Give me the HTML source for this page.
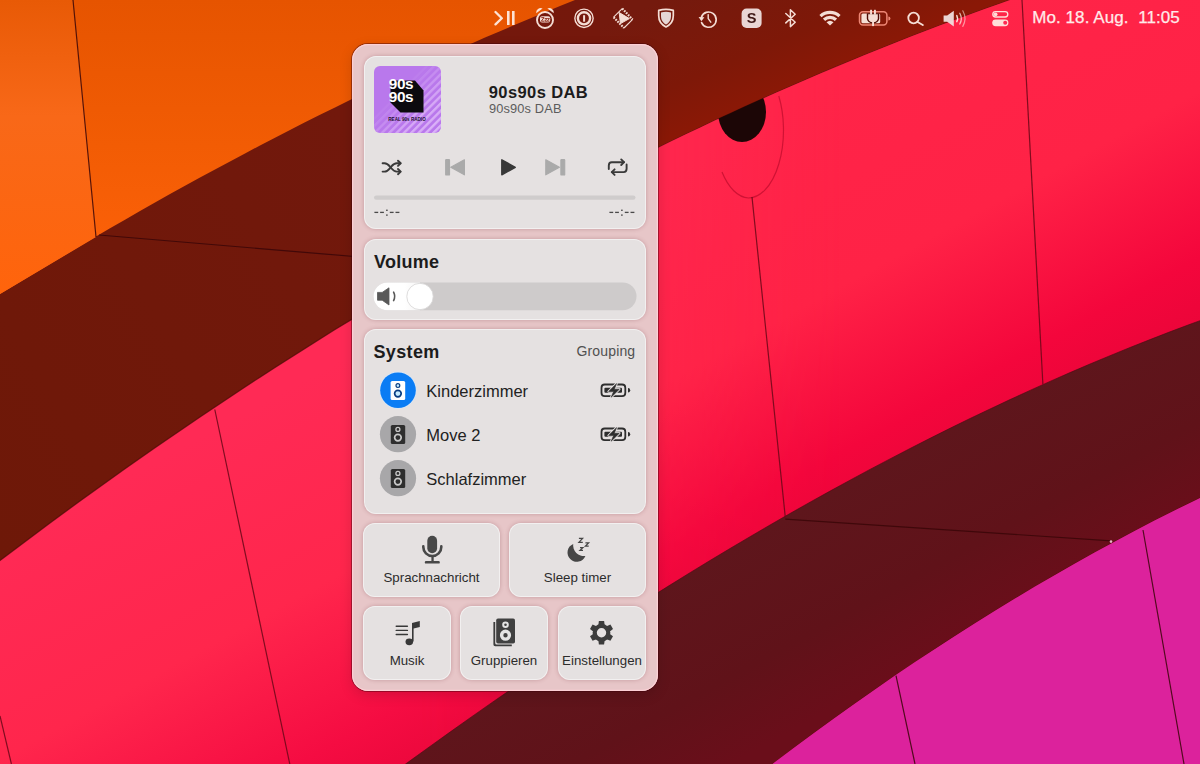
<!DOCTYPE html>
<html><head><meta charset="utf-8">
<style>
*{margin:0;padding:0;box-sizing:border-box}
html,body{width:1200px;height:764px;overflow:hidden;background:#ff2a55;font-family:"Liberation Sans",sans-serif}
svg{position:absolute;left:0;top:0}
.t{position:absolute;white-space:pre;line-height:1}
#popup{position:absolute;left:352px;top:44px;width:306px;height:647px;border-radius:16px;background:#e7c6c8;box-shadow:0 0 0 1px rgba(60,0,10,.42), inset 0 0 0 1.3px rgba(255,208,214,.9), 0 4px 14px rgba(0,0,0,.14)}
.card{position:absolute;border-radius:12px;background:#e5e1e1;box-shadow:inset 0 0 0 1px rgba(255,255,255,.5), 0 0 4px rgba(110,40,50,.28)}
</style></head><body>
<svg width="1200" height="764" viewBox="0 0 1200 764">
 <defs>
  <linearGradient id="gOr" x1="0" y1="0" x2="0" y2="290" gradientUnits="userSpaceOnUse"><stop offset="0" stop-color="#e65400"/><stop offset=".5" stop-color="#f25c04"/><stop offset="1" stop-color="#ff620a"/></linearGradient>
  <linearGradient id="gOrL" x1="0" y1="0" x2="0" y2="290" gradientUnits="userSpaceOnUse"><stop offset="0" stop-color="#e85a06"/><stop offset=".4" stop-color="#f86818"/><stop offset="1" stop-color="#ff640c"/></linearGradient>
  <linearGradient id="gB1" x1="0" y1="560" x2="900" y2="40" gradientUnits="userSpaceOnUse"><stop offset="0" stop-color="#6e1808"/><stop offset=".5" stop-color="#72180c"/><stop offset="1" stop-color="#78180c"/></linearGradient>
  <linearGradient id="gPk" x1="230" y1="420" x2="430" y2="787" gradientUnits="userSpaceOnUse">
   <stop offset="0" stop-color="#ff2a55"/><stop offset=".45" stop-color="#ff264c"/><stop offset=".8" stop-color="#f50c42"/><stop offset="1" stop-color="#e8063a"/>
  </linearGradient>
  <linearGradient id="gPkR" x1="900" y1="40" x2="1100" y2="407" gradientUnits="userSpaceOnUse">
   <stop offset="0" stop-color="#ff2448"/><stop offset=".45" stop-color="#ff2246"/><stop offset=".8" stop-color="#f4063c"/><stop offset="1" stop-color="#e80438"/>
  </linearGradient>
  <linearGradient id="gPkMix" x1="0" y1="0" x2="1200" y2="0" gradientUnits="userSpaceOnUse"><stop offset=".35" stop-color="#fff" stop-opacity="1"/><stop offset=".7" stop-color="#fff" stop-opacity="0"/></linearGradient>
  <mask id="mMix"><rect width="1200" height="764" fill="url(#gPkMix)"/></mask>
  <linearGradient id="gB1R" x1="748.6" y1="-38.5" x2="800" y2="81" gradientUnits="userSpaceOnUse"><stop offset="0" stop-color="#741a0e"/><stop offset=".65" stop-color="#7e1808"/><stop offset="1" stop-color="#8a1806"/></linearGradient>
  <clipPath id="cR"><rect x="600" y="-10" width="700" height="400"/></clipPath>
  <linearGradient id="gB2" x1="900" y1="455" x2="991" y2="622" gradientUnits="userSpaceOnUse"><stop offset="0" stop-color="#5e161c"/><stop offset=".6" stop-color="#601219"/><stop offset="1" stop-color="#6a0e1a"/></linearGradient>
 </defs>
 <rect width="1200" height="764" fill="url(#gPkR)"/>
 <rect width="1200" height="764" fill="url(#gPk)" mask="url(#mMix)"/>
 <path d="M778.8,96 A35,68 0 0 1 748.5,198 A35,68 0 0 1 722,172" fill="none" stroke="#b00626" stroke-opacity=".6" stroke-width="1.2"/>
 <ellipse cx="742" cy="112" rx="24" ry="30" fill="#1c0606"/>
 <g fill="url(#gB1)" stroke="#4a0a04" stroke-width="1.2" stroke-opacity=".7"><polygon points="-10,-10 -10.0,568.1 5.0,556.7 20.0,545.4 35.0,534.2 50.0,523.1 65.0,512.0 80.0,501.1 95.0,490.2 110.0,479.5 125.0,468.8 140.0,458.3 155.0,447.8 170.0,437.4 185.0,427.2 200.0,417.0 215.0,406.9 230.0,396.9 245.0,387.0 260.0,377.2 275.0,367.5 290.0,357.9 305.0,348.4 320.0,338.9 335.0,329.6 350.0,320.4 365.0,311.2 655.0,148.6 670.0,141.3 685.0,134.0 700.0,126.9 715.0,119.8 730.0,112.9 745.0,106.0 760.0,99.2 775.0,92.5 790.0,85.9 805.0,79.4 820.0,73.0 835.0,66.6 850.0,60.4 865.0,54.2 880.0,48.2 895.0,42.2 910.0,36.3 925.0,30.5 940.0,24.8 955.0,19.2 970.0,13.7 985.0,8.2 1000.0,2.9 1015.0,-2.4 1030.0,-7.6 1045,-10"/></g>
 <g fill="url(#gB1R)" clip-path="url(#cR)"><polygon points="-10,-10 -10.0,568.1 5.0,556.7 20.0,545.4 35.0,534.2 50.0,523.1 65.0,512.0 80.0,501.1 95.0,490.2 110.0,479.5 125.0,468.8 140.0,458.3 155.0,447.8 170.0,437.4 185.0,427.2 200.0,417.0 215.0,406.9 230.0,396.9 245.0,387.0 260.0,377.2 275.0,367.5 290.0,357.9 305.0,348.4 320.0,338.9 335.0,329.6 350.0,320.4 365.0,311.2 655.0,148.6 670.0,141.3 685.0,134.0 700.0,126.9 715.0,119.8 730.0,112.9 745.0,106.0 760.0,99.2 775.0,92.5 790.0,85.9 805.0,79.4 820.0,73.0 835.0,66.6 850.0,60.4 865.0,54.2 880.0,48.2 895.0,42.2 910.0,36.3 925.0,30.5 940.0,24.8 955.0,19.2 970.0,13.7 985.0,8.2 1000.0,2.9 1015.0,-2.4 1030.0,-7.6 1045,-10"/></g>
 <g fill="url(#gOr)"><polygon points="-5,-5 590.0,-5.9 575.0,0.0 560.0,6.1 545.0,12.2 530.0,18.4 515.0,24.8 500.0,31.2 485.0,37.6 470.0,44.2 455.0,50.9 440.0,57.6 425.0,64.5 410.0,71.4 395.0,78.4 380.0,85.5 365.0,92.7 350.0,100.0 335.0,107.4 320.0,114.8 305.0,122.3 290.0,130.0 275.0,137.7 260.0,145.5 245.0,153.4 230.0,161.4 215.0,169.4 200.0,177.6 185.0,185.8 170.0,194.1 155.0,202.6 140.0,211.1 125.0,219.7 110.0,228.3 96.0,236.5 0,294 -5,297"/></g>
 <polygon points="-5,-5 72.6,-5 96,237 0,294 -5,297" fill="url(#gOrL)"/>
 <g fill="url(#gB2)" stroke="#4a0a10" stroke-width="1" stroke-opacity=".6"><polygon points="390.0,775.4 410.0,760.8 430.0,746.4 450.0,732.1 470.0,717.9 490.0,703.9 510.0,690.1 530.0,676.4 550.0,662.8 570.0,649.5 590.0,636.3 610.0,623.2 630.0,610.3 650.0,597.6 670.0,585.1 690.0,572.7 710.0,560.5 730.0,548.5 750.0,536.7 770.0,525.0 790.0,513.5 810.0,502.2 830.0,491.1 850.0,480.2 870.0,469.4 890.0,458.9 910.0,448.5 930.0,438.3 950.0,428.3 970.0,418.5 990.0,409.0 1010.0,399.6 1030.0,390.4 1050.0,381.4 1070.0,372.6 1090.0,364.0 1110.0,355.7 1130.0,347.5 1150.0,339.6 1170.0,331.8 1190.0,324.3 1210.0,317.0 1215.0,490.7 1195.0,500.4 1175.0,510.2 1155.0,520.3 1135.0,530.7 1115.0,541.4 1095.0,552.3 1075.0,563.4 1055.0,574.9 1035.0,586.6 1015.0,598.5 995.0,610.7 975.0,623.2 955.0,635.9 935.0,648.9 915.0,662.1 895.0,675.6 875.0,689.4 855.0,703.4 835.0,717.7 815.0,732.2 795.0,747.0 775.0,762.1 755.0,777.4"/></g>
 <g fill="#dc229c"><polygon points="1215.0,490.7 1195.0,500.4 1175.0,510.2 1155.0,520.3 1135.0,530.7 1115.0,541.4 1095.0,552.3 1075.0,563.4 1055.0,574.9 1035.0,586.6 1015.0,598.5 995.0,610.7 975.0,623.2 955.0,635.9 935.0,648.9 915.0,662.1 895.0,675.6 875.0,689.4 855.0,703.4 835.0,717.7 815.0,732.2 795.0,747.0 775.0,762.1 755.0,777.4 745,770 1215,770"/></g>
 <g stroke="#3a0608" stroke-width="1.2" fill="none" opacity=".85">
  <line x1="73" y1="0" x2="96" y2="237"/>
  <line x1="99" y1="235" x2="360" y2="257"/>
  <line x1="214.8" y1="409.5" x2="289.8" y2="764" stroke="#6a0818"/>
  <line x1="0" y1="716" x2="11.4" y2="764" stroke="#6a0818"/>
  <line x1="752" y1="197" x2="785.3" y2="517.3" stroke="#6a0818"/>
  <line x1="1022" y1="0" x2="1042.9" y2="384.4" stroke="#6a0818"/>
  <line x1="785.3" y1="519.2" x2="1111.3" y2="540.8"/>
  <line x1="896" y1="675.6" x2="915" y2="764"/>
  <line x1="1143" y1="530" x2="1184" y2="764"/>
 </g>
 <circle cx="1111" cy="541.6" r="1.3" fill="#ffd6e6" opacity=".85"/>
</svg>

<!-- MENUBAR -->
<svg width="1200" height="36" viewBox="0 0 1200 36" style="opacity:.92">
 <g fill="none" stroke="#ffeee6" stroke-linecap="round" stroke-linejoin="round">
  <!-- >|| -->
  <path d="M495.5,12 L501.8,18.2 L495.5,24.4" stroke-width="2.3"/>
  <line x1="508.3" y1="11" x2="508.3" y2="25" stroke-width="2.6" stroke-linecap="butt"/>
  <line x1="513.3" y1="11" x2="513.3" y2="25" stroke-width="2.6" stroke-linecap="butt"/>
  <!-- alarm -->
  <circle cx="545" cy="20" r="8" stroke-width="1.9"/>
  <!-- 1password -->
  <circle cx="584" cy="18.3" r="9.15" stroke-width="1.4"/>
  <circle cx="584" cy="18.3" r="6.1" stroke-width="2.4"/>
  <line x1="584.1" y1="15.2" x2="584.1" y2="21.7" stroke-width="2" stroke-linecap="butt"/>
  <!-- shield -->
  <path d="M658.7,10.4 Q666,8.4 673.3,10.4 V15.8 C673.3,21.6 670.2,24.9 666,27 C661.8,24.9 658.7,21.6 658.7,15.8 Z" stroke-width="1.7"/>
  <!-- time machine -->
  <path d="M701.4,17.2 A7.6,7.6 0 1 1 701.6,22.6" stroke-width="1.7"/>
  <path d="M708.2,14.6 V18.6 L710.8,22.2" stroke-width="1.4"/>
  <!-- bluetooth -->
  <path d="M785.8,13.5 L795.2,22.2 L790.4,26.6 V9.8 L795.2,14.2 L785.8,22.9" stroke-width="1.5"/>
  <!-- search -->
  <circle cx="913.6" cy="18" r="5.3" stroke-width="1.8"/>
  <line x1="917.6" y1="22" x2="922.8" y2="25" stroke-width="1.9"/>
  <!-- volume waves -->
  <path d="M956.8,15.6 Q958.4,18.6 956.8,21.6" stroke-width="1.5"/>
  <path d="M959.8,13.2 Q962.8,18.6 959.8,24" stroke-width="1.3" stroke-opacity=".8"/>
  <path d="M962.8,10.8 Q967.2,18.6 962.8,26.4" stroke-width="1.2" stroke-opacity=".6"/>
  <!-- control center -->
  <rect x="992.8" y="11.6" width="15" height="5.4" rx="2.7" stroke-width="1.3"/>
 </g>
 <g fill="#ffeee6">
  <!-- alarm bells -->
  <path d="M536.2,13.2 A4.6,4.6 0 0 1 542.6,8.4 Z"/><path d="M553.8,13.2 A4.6,4.6 0 0 0 547.4,8.4 Z"/>
  <rect x="540" y="16.2" width="10.2" height="6.4" rx="2"/>
  <!-- shield fill -->
  <path d="M661,12.4 Q666,11.2 671,12.4 V16 C671,20.4 668.8,23 666,24.5 C663.2,23 661,20.4 661,16 Z" fill="#f0e6e6"/>
  <!-- time machine arrow -->
  <path d="M698.6,17 L704.4,17.2 L701.4,21.2 Z"/>
  <!-- S -->
  <rect x="741.6" y="8.6" width="20" height="19.4" rx="5" fill="#f3e6e6"/>
  <!-- wifi -->
  <path d="M819.4,15 A15.5,15.5 0 0 1 840.6,15 L838.4,17.3 A12.3,12.3 0 0 0 821.6,17.3 Z"/>
  <path d="M822.9,18.6 A10.5,10.5 0 0 1 837.1,18.6 L834.9,20.9 A7.3,7.3 0 0 0 825.1,20.9 Z"/>
  <path d="M826.5,22.2 A5.3,5.3 0 0 1 833.5,22.2 L830,25.6 Z"/>
  <!-- battery -->
  <rect x="861.4" y="13.4" width="18.8" height="9.8" rx="1.5"/>
  <path d="M888.4,16.4 A2,2 0 0 1 888.4,20.4 Z" fill="#f8907e"/>
  <!-- volume speaker -->
  <path d="M943.6,15.4 H947.2 L953.8,10.8 V26.4 L947.2,21.8 H943.6 Z" fill="#f3e4e4"/>
  <!-- control center bottom pill -->
  <rect x="992.2" y="19.4" width="16.2" height="6.8" rx="3.4"/>
  <circle cx="995.6" cy="14.3" r="1.9"/>
 </g>
 <!-- battery outline salmon -->
 <rect x="859.5" y="11.7" width="27.4" height="13.3" rx="3.4" fill="none" stroke="#f8907e" stroke-width="1.5"/>
 <!-- plug -->
 <path d="M866.8,13.2 H879.2 V18.2 Q879.2,22.8 873,23.4 Q866.8,22.8 866.8,18.2 Z" fill="#4a0c06"/>
 <path d="M868.2,14.3 H877.8 V18.2 Q877.8,21.8 873,22.3 Q868.2,21.8 868.2,18.2 Z" fill="#ffeee6"/>
 <rect x="870.1" y="9.8" width="1.9" height="4.8" fill="#ffeee6"/><rect x="874" y="9.8" width="1.9" height="4.8" fill="#ffeee6"/>
 <rect x="872.1" y="21.5" width="1.9" height="4.6" fill="#ffeee6"/>
 <!-- 1 in S -->
 <text x="751.6" y="23.4" font-family="Liberation Sans" font-weight="bold" font-size="14.6" fill="#3a1818" text-anchor="middle">S</text>
 <g fill="none" stroke="#8a2010" stroke-width=".9"><path d="M541.3,17.6 H544 L541.3,21.2 H544"/><path d="M544.6,18.6 H547 L544.6,21.2 H547"/><path d="M547.2,18.6 H549.4 L547.2,21.2 H549.4"/></g>
 <!-- film strip -->
 <g stroke="#ffeee6" fill="none" stroke-width="2.2" stroke-dasharray="1.7 1.1">
  <line x1="613.6" y1="17.2" x2="624" y2="28"/>
  <line x1="622.2" y1="8.6" x2="632.6" y2="19.4"/>
 </g>
 <g stroke="#ffeee6" fill="none" stroke-width="1.1">
  <line x1="613.6" y1="17.2" x2="622.2" y2="8.6"/>
  <line x1="624" y1="28" x2="632.6" y2="19.4"/>
 </g>
 <path d="M619.2,12.6 L629.4,18.6 L620.4,23.6 Z" fill="#ffeee6" stroke="#ffeee6" stroke-width="1" stroke-linejoin="round"/>
 <circle cx="1005.2" cy="22.8" r="2" fill="#ff2a55"/>
</svg>
<div class="t" style="left:1032.2px;top:8.6px;font-size:17px;color:#ffeaea;letter-spacing:.08px;-webkit-text-stroke:.25px #ffeaea">Mo. 18. Aug.  11:05</div>

<div id="popup">
 <div class="card" style="left:12px;top:12px;width:282px;height:173px"></div>
 <div class="card" style="left:12px;top:195px;width:282px;height:81px"></div>
 <div class="card" style="left:12px;top:285px;width:282px;height:185px"></div>
 <div class="card" style="left:11px;top:479px;width:137px;height:74px"></div>
 <div class="card" style="left:157px;top:479px;width:137px;height:74px"></div>
 <div class="card" style="left:11px;top:562px;width:88px;height:74px"></div>
 <div class="card" style="left:108px;top:562px;width:88px;height:74px"></div>
 <div class="card" style="left:206px;top:562px;width:88px;height:74px"></div>
</div>

<!-- POPUP TEXT -->
<div class="t" style="left:488.8px;top:83.5px;font-size:16.5px;font-weight:bold;color:#1c1c1c;letter-spacing:.4px">90s90s DAB</div>
<div class="t" style="left:489px;top:103.2px;font-size:12.8px;color:#5c5c5c;letter-spacing:.15px">90s90s DAB</div>
<div class="t" style="left:374px;top:253.2px;font-size:18px;font-weight:bold;color:#1c1c1c;letter-spacing:.25px">Volume</div>
<div class="t" style="left:373.5px;top:342.5px;font-size:18px;font-weight:bold;color:#1c1c1c;letter-spacing:.35px">System</div>
<div class="t" style="left:576.5px;top:344.2px;font-size:14px;color:#505050;letter-spacing:.15px">Grouping</div>
<div class="t" style="left:426.3px;top:383px;font-size:16.5px;color:#222">Kinderzimmer</div>
<div class="t" style="left:426.3px;top:427px;font-size:16.5px;color:#222">Move 2</div>
<div class="t" style="left:426.3px;top:471px;font-size:16.5px;color:#222">Schlafzimmer</div>
<div class="t" style="left:363px;width:137px;text-align:center;top:571px;font-size:13.3px;color:#2c2c2c">Sprachnachricht</div>
<div class="t" style="left:509px;width:137px;text-align:center;top:571px;font-size:13.3px;color:#2c2c2c">Sleep timer</div>
<div class="t" style="left:363px;width:88px;text-align:center;top:654px;font-size:13.3px;color:#2c2c2c">Musik</div>
<div class="t" style="left:460px;width:88px;text-align:center;top:654px;font-size:13.3px;color:#2c2c2c">Gruppieren</div>
<div class="t" style="left:558px;width:88px;text-align:center;top:654px;font-size:13.3px;color:#2c2c2c">Einstellungen</div>

<!-- POPUP ICONS -->
<svg width="1200" height="764" viewBox="0 0 1200 764">
 <defs>
  <pattern id="stripes" patternUnits="userSpaceOnUse" width="5.2" height="5.2" patternTransform="rotate(-45 407 99)">
   <rect width="5.2" height="2.4" fill="#dcb4f8"/>
  </pattern>
  <linearGradient id="stripeMask" x1="374" y1="66" x2="441" y2="133" gradientUnits="userSpaceOnUse">
   <stop offset="0.35" stop-color="#fff" stop-opacity="0"/><stop offset=".7" stop-color="#fff" stop-opacity=".8"/><stop offset="1" stop-color="#fff" stop-opacity="1"/>
  </linearGradient>
  <mask id="sm"><rect x="374" y="66" width="67" height="67" fill="url(#stripeMask)"/></mask>
  <clipPath id="artclip"><rect x="374" y="66" width="67" height="67" rx="6"/></clipPath>
 </defs>
 <!-- album art -->
 <g clip-path="url(#artclip)">
  <rect x="374" y="66" width="67" height="67" fill="#b978ec"/>
  <rect x="374" y="66" width="67" height="67" fill="url(#stripes)" mask="url(#sm)" opacity="1"/>
  <path d="M390.5,80.4 H415 L423.5,90.4 V112.4 H400.5 L390.5,102.4 Z" fill="#0c0a0e"/>
  <text x="388.8" y="89.4" font-family="Liberation Sans" font-weight="bold" font-size="15.4" fill="#fff" letter-spacing="-0.4">90s</text>
  <text x="388.8" y="101.8" font-family="Liberation Sans" font-weight="bold" font-size="15.4" fill="#fff" letter-spacing="-0.4">90s</text>
  <text x="407" y="120.5" font-family="Liberation Sans" font-weight="bold" font-size="4.6" fill="#241030" text-anchor="middle">REAL 90s RADIO</text>
 </g>
 <!-- controls -->
 <g fill="none" stroke="#3a3a3a" stroke-width="1.9" stroke-linecap="round" stroke-linejoin="round">
  <path d="M382.6,163.3 H384.5 C387.6,163.3 388.6,165 390.6,167.4 C392.6,169.8 393.6,171.6 396.8,171.6 H400.4"/>
  <path d="M382.6,171.6 H384.5 C387.6,171.6 388.6,169.8 390.6,167.4 C392.6,165 393.6,163.3 396.8,163.3 H400.4"/>
  <path d="M398,160.7 L400.7,163.3 L398,165.9"/>
  <path d="M398,169 L400.7,171.6 L398,174.2"/>
  <path d="M608.8,169 V165.5 C608.8,163.5 610,162.2 611.8,162.2 H624"/>
  <path d="M621.2,159.4 L624,162.2 L621.2,165"/>
  <path d="M626.6,164.5 V168.8 C626.6,170.8 625.4,172.1 623.6,172.1 H611.8"/>
  <path d="M614.6,169.3 L611.8,172.1 L614.6,174.9"/>
 </g>
 <g fill="#aaaaaa" stroke="#aaaaaa" stroke-width="1.2" stroke-linejoin="round">
  <rect x="445.7" y="159.6" width="3.8" height="15.4" rx=".6"/>
  <path d="M464.4,159.8 V174.8 L450.8,167.3 Z"/>
  <rect x="560.9" y="159.6" width="3.8" height="15.4" rx=".6"/>
  <path d="M545.8,159.8 V174.8 L559.4,167.3 Z"/>
 </g>
 <path d="M501.8,159.8 V174.8 L515.3,167.3 Z" fill="#383838" stroke="#383838" stroke-width="1.4" stroke-linejoin="round"/>
 <!-- progress -->
 <rect x="374" y="195.4" width="261.5" height="4.4" rx="2.2" fill="#cfcccc"/>
 <g stroke="#4a4a4a" stroke-width="1.3">
  <line x1="374.4" y1="212.4" x2="378.2" y2="212.4"/><line x1="380.1" y1="212.4" x2="383.9" y2="212.4"/>
  <line x1="389.8" y1="212.4" x2="393.6" y2="212.4"/><line x1="395.5" y1="212.4" x2="399.4" y2="212.4"/>
  <line x1="609.4" y1="212.4" x2="613.2" y2="212.4"/><line x1="615.1" y1="212.4" x2="618.9" y2="212.4"/>
  <line x1="624.8" y1="212.4" x2="628.6" y2="212.4"/><line x1="630.5" y1="212.4" x2="634.4" y2="212.4"/>
 </g>
 <g fill="#3c3c3c"><rect x="386.2" y="209.6" width="1.4" height="1.4"/><rect x="386.2" y="214.4" width="1.4" height="1.4"/><rect x="621.2" y="209.6" width="1.4" height="1.4"/><rect x="621.2" y="214.4" width="1.4" height="1.4"/></g>

 <!-- volume slider -->
 <rect x="373.5" y="282.4" width="263" height="27.8" rx="13.9" fill="#cecbcb"/>
 <defs><linearGradient id="fillg" x1="373" x2="430" gradientUnits="userSpaceOnUse"><stop offset="0.55" stop-color="#fff"/><stop offset="1" stop-color="#f0eeee"/></linearGradient></defs>
 <path d="M387.4,282.4 H420 V310.2 H387.4 A13.9,13.9 0 0 1 387.4,282.4 Z" fill="url(#fillg)"/>
 <circle cx="420" cy="296.5" r="13.2" fill="#fff" stroke="#d6d4d4" stroke-width=".8"/>
 <path d="M377.5,292.4 H382.2 L389,287.8 V305 L382.2,300.2 H377.5 Z" fill="#585858" stroke="#585858" stroke-width=".8" stroke-linejoin="round"/>
 <path d="M393.6,292.2 Q395.8,296.4 393.6,300.6" fill="none" stroke="#585858" stroke-width="1.6" stroke-linecap="round"/>

 <!-- devices -->
 <circle cx="398" cy="390.2" r="18.6" fill="#d2e8ff" opacity=".7"/>
 <circle cx="398" cy="390.2" r="17.8" fill="#0a7cf4"/>
 <rect x="390.6" y="381" width="14.6" height="19" rx="1.6" fill="#fff"/>
 <circle cx="397.9" cy="385.6" r="1.9" fill="#c6ecff" stroke="#0a3e82" stroke-width="1.2"/>
 <circle cx="397.9" cy="393.6" r="3.3" fill="#c6ecff" stroke="#0a3e82" stroke-width="1.7"/>

 <circle cx="398" cy="434.2" r="18.1" fill="#a8a7a9"/>
 <rect x="390.8" y="425" width="14.4" height="19" rx="1.6" fill="#2e2e2e"/>
 <circle cx="397.9" cy="429.4" r="2" fill="#2e2e2e" stroke="#c8c8c8" stroke-width="1.3"/>
 <circle cx="397.9" cy="437.6" r="3.3" fill="#2e2e2e" stroke="#c8c8c8" stroke-width="1.7"/>

 <circle cx="398" cy="478.2" r="18.1" fill="#a8a7a9"/>
 <rect x="390.8" y="469" width="14.4" height="19" rx="1.6" fill="#2e2e2e"/>
 <circle cx="397.9" cy="473.4" r="2" fill="#2e2e2e" stroke="#c8c8c8" stroke-width="1.3"/>
 <circle cx="397.9" cy="481.6" r="3.3" fill="#2e2e2e" stroke="#c8c8c8" stroke-width="1.7"/>

 <!-- batteries -->
 <g id="bat">
  <rect x="601.5" y="384.5" width="23.8" height="11.6" rx="3.2" fill="none" stroke="#2e2e2e" stroke-width="1.8"/>
  <rect x="604.4" y="387.8" width="17.6" height="5" rx="1" fill="#2e2e2e"/>
  <path d="M628,388 A2.2,2.2 0 0 1 628,392.4 Z" fill="#2e2e2e"/>
  <path d="M616.6,383.6 L608.6,391.5 H613.6 L611.2,397.2 L619.3,389.2 H614.3 Z" fill="#2e2e2e" stroke="#e5e1e1" stroke-width="2.4" stroke-linejoin="round"/><path d="M616.6,383.6 L608.6,391.5 H613.6 L611.2,397.2 L619.3,389.2 H614.3 Z" fill="#2e2e2e" stroke="#2e2e2e" stroke-width=".6" stroke-linejoin="round"/>
 </g>
 <use href="#bat" y="44"/>

 <!-- mic -->
 <g fill="#484848">
  <rect x="427.3" y="535.8" width="9.8" height="17.4" rx="4.9"/>
  <rect x="431.4" y="556" width="2.3" height="6"/>
  <rect x="424.8" y="561" width="15" height="2.6" rx="1.2"/>
 </g>
 <path d="M423.3,546.4 V547 A9,9 0 0 0 441.3,547 V546.4" fill="none" stroke="#484848" stroke-width="2.6" stroke-linecap="round"/>
 <!-- moon -->
 <path d="M573.2,543.9 A9.3,9.3 0 1 0 585.4,556 A10.8,10.8 0 0 1 573.2,543.9 Z" fill="#464646"/>
 <g fill="none" stroke="#464646" stroke-width="1.25" stroke-linejoin="miter">
  <path d="M578.9,538.3 H582.6 L578.9,542.3 H582.8"/>
  <path d="M585.4,542.9 H588.6 L585.4,546 H588.7"/>
  <path d="M580,547.6 H582.9 L580,550.3 H583"/>
 </g>
 <!-- music -->
 <g stroke="#383838" stroke-width="1.4" stroke-linecap="round">
  <line x1="396.2" y1="626.2" x2="407.4" y2="626.2"/>
  <line x1="396.2" y1="630.4" x2="407.4" y2="630.4"/>
  <line x1="396.2" y1="634.5" x2="407.4" y2="634.5"/>
 </g>
 <path d="M412,623 L419.8,621 V627 L413.6,628.6 V641.4 H412 Z" fill="#383838"/>
 <ellipse cx="409.3" cy="641.8" rx="3.8" ry="3.4" fill="#383838"/>
 <!-- speaker stack -->
 <path d="M493.4,622 V644.4 A1.8,1.8 0 0 0 495.2,646.2 H511.8 V644.6 H496.8 A1.5,1.5 0 0 1 495.2,643.1 V622 Z" fill="#3c3c3c"/>
 <rect x="496.2" y="618.5" width="18.8" height="25" rx="1.8" fill="#404040"/>
 <circle cx="505.5" cy="624.7" r="2.3" fill="#404040" stroke="#e4e4e4" stroke-width="2"/>
 <circle cx="505.5" cy="635.2" r="3.9" fill="#404040" stroke="#e4e4e4" stroke-width="3.4"/>
 <!-- gear -->
 <g transform="translate(601.5 632.7)" fill="#3c3c3c">
  <path id="tooth" d="M-2.6,-11.8 H2.6 L3.2,-7 H-3.2 Z"/>
  <use href="#tooth" transform="rotate(60)"/><use href="#tooth" transform="rotate(120)"/><use href="#tooth" transform="rotate(180)"/><use href="#tooth" transform="rotate(240)"/><use href="#tooth" transform="rotate(300)"/>
  <circle r="6.8" fill="none" stroke="#3c3c3c" stroke-width="4.2"/>
 </g>
</svg>
</body></html>
